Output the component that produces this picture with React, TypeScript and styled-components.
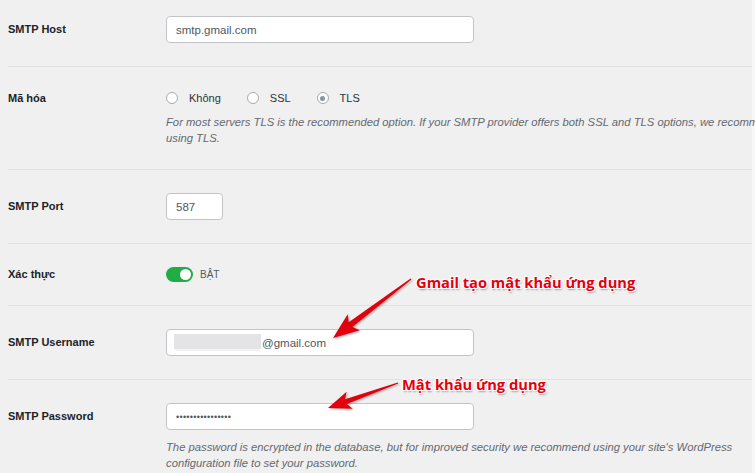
import React, { FC } from 'react';
import styled, { createGlobalStyle } from 'styled-components';

const GlobalStyle = createGlobalStyle`
    html, body {
        margin: 0;
        background: #f7f7f7;
    }
    body {
        font-family: "Liberation Sans", Arial, sans-serif;
        overflow: hidden;
    }
`;

type Pt = [number, number];

// tapered arrow: thin tail, wide head at the tip
const arrowPoints = (tail: Pt, tip: Pt, headLen: number, headHalf: number, neckHalf: number, tailHalf: number) => {
    const dx = tail[0] - tip[0];
    const dy = tail[1] - tip[1];
    const len = Math.hypot(dx, dy);
    const ux = dx / len;
    const uy = dy / len;
    const nx = -uy;
    const ny = ux;
    const bx = tip[0] + ux * headLen;
    const by = tip[1] + uy * headLen;
    const wx = tip[0] + ux * (headLen + 4);
    const wy = tip[1] + uy * (headLen + 4);
    const pts: Pt[] = [
        tip,
        [wx + nx * headHalf, wy + ny * headHalf],
        [bx + nx * neckHalf, by + ny * neckHalf],
        [tail[0] + nx * tailHalf, tail[1] + ny * tailHalf],
        [tail[0] - nx * tailHalf, tail[1] - ny * tailHalf],
        [bx - nx * neckHalf, by - ny * neckHalf],
        [wx - nx * headHalf, wy - ny * headHalf],
    ];
    return pts.map((p) => `${p[0].toFixed(1)},${p[1].toFixed(1)}`).join(' ');
};

const App: FC = () => {
    return (
        <Root>
            <GlobalStyle />
            <Page>
                <Row>
                    <Label $h={27}>SMTP Host</Label>
                    <div>
                        <Field $w={308}>smtp.gmail.com</Field>
                    </div>
                </Row>
                <Row>
                    <Label $h={16}>Mã hóa</Label>
                    <div>
                        <RadioGroup>
                            <Option>
                                <Radio />
                                Không
                            </Option>
                            <Option>
                                <Radio />
                                SSL
                            </Option>
                            <Option>
                                <Radio $checked />
                                TLS
                            </Option>
                        </RadioGroup>
                        <Description $gap={9}>
                            For most servers TLS is the recommended option. If your SMTP provider offers both SSL and TLS options, we recommend
                            <br />
                            using TLS.
                        </Description>
                    </div>
                </Row>
                <Row>
                    <Label $h={27}>SMTP Port</Label>
                    <div>
                        <Field $w={57}>587</Field>
                    </div>
                </Row>
                <Row>
                    <Label $h={15}>Xác thực</Label>
                    <ToggleRow>
                        <Toggle>
                            <Knob />
                        </Toggle>
                        <ToggleText>BẬT</ToggleText>
                    </ToggleRow>
                </Row>
                <Row>
                    <Label $h={27}>SMTP Username</Label>
                    <div>
                        <Field $w={308}>
                            <Redacted aria-hidden />
                            @gmail.com
                        </Field>
                    </div>
                </Row>
                <Row $last>
                    <Label $h={27}>SMTP Password</Label>
                    <div>
                        <Field $w={308}>
                            <Dots>••••••••••••••••</Dots>
                        </Field>
                        <Description $gap={10}>
                            The password is encrypted in the database, but for improved security we recommend using your site's WordPress
                            <br />
                            configuration file to set your password.
                        </Description>
                    </div>
                </Row>
            </Page>

            <Arrows width="755" height="473" viewBox="0 0 755 473">
                <polygon points={arrowPoints([411, 279], [333, 338], 22, 10, 3, 0.6)} />
                <polygon points={arrowPoints([398, 383], [328, 408], 19, 9, 2.6, 0.6)} />
            </Arrows>
            <Callout $left={416} $top={272}>Gmail tạo mật khẩu ứng dụng</Callout>
            <Callout $left={402} $top={374}>Mật khẩu ứng dụng</Callout>
        </Root>
    );
};

const Root = styled.div`
    position: relative;
    width: 755px;
    height: 473px;
    overflow: hidden;
`;

const Page = styled.div`
    width: 752px;
    min-height: 490px;
    margin-top: -7px;
    padding-left: 8px;
    box-sizing: border-box;
    background: #f0f0f1;
`;

const Row = styled.div<{ $last?: boolean }>`
    display: grid;
    grid-template-columns: 158px 1fr;
    align-items: start;
    padding: 23px 0;
    border-bottom: ${(p) => (p.$last ? 'none' : '1px solid #e1e1e3')};
`;

const Label = styled.div<{ $h: number }>`
    font-size: 11px;
    font-weight: 700;
    color: #1d2327;
    line-height: ${(p) => p.$h}px;
`;

const Field = styled.div<{ $w: number }>`
    display: flex;
    align-items: center;
    width: ${(p) => p.$w}px;
    height: 27px;
    box-sizing: border-box;
    padding: 0 9px;
    background: #fff;
    border: 1px solid #c3c4c7;
    border-radius: 4px;
    font-size: 11.5px;
    color: #50575e;
    white-space: nowrap;
`;

const Redacted = styled.span`
    display: inline-block;
    width: 87px;
    height: 15px;
    margin: -3px 1px 0 -2px;
    background: #e4e4e6;
    box-shadow: 0 3px 0 -1px #f2f2f2;
`;

const Dots = styled.span`
    font-size: 9px;
    letter-spacing: 0.3px;
    color: #50575e;
`;

const RadioGroup = styled.div`
    display: flex;
    align-items: center;
    gap: 26px;
    height: 16px;
`;

const Option = styled.label`
    display: flex;
    align-items: center;
    gap: 11px;
    font-size: 11px;
    color: #2c3338;
`;

const Radio = styled.span<{ $checked?: boolean }>`
    position: relative;
    width: 12px;
    height: 12px;
    box-sizing: border-box;
    border: 1px solid #a7aaad;
    border-radius: 50%;
    background: #fff;

    &::after {
        content: '';
        display: ${(p) => (p.$checked ? 'block' : 'none')};
        position: absolute;
        left: 2.5px;
        top: 2.5px;
        width: 5px;
        height: 5px;
        border-radius: 50%;
        background: #8a93a3;
    }
`;

const Description = styled.p<{ $gap: number }>`
    margin: ${(p) => p.$gap}px 0 0;
    font-size: 11.25px;
    font-style: italic;
    line-height: 15.5px;
    color: #646970;
    white-space: nowrap;
`;

const ToggleRow = styled.div`
    display: flex;
    align-items: center;
    gap: 7px;
    height: 15px;
`;

const Toggle = styled.span`
    display: flex;
    align-items: center;
    justify-content: flex-end;
    width: 27px;
    height: 15px;
    box-sizing: border-box;
    padding: 0 2px;
    border-radius: 8px;
    background: #20ad45;
`;

const Knob = styled.span`
    width: 11px;
    height: 11px;
    border-radius: 50%;
    background: #fff;
`;

const ToggleText = styled.span`
    font-size: 10px;
    color: #50575e;
`;

const Arrows = styled.svg`
    position: absolute;
    left: 0;
    top: 0;
    pointer-events: none;
    fill: #e3000e;
    filter: drop-shadow(1px 1px 1px rgba(0, 0, 0, 0.35));
`;

const Callout = styled.div<{ $left: number; $top: number }>`
    position: absolute;
    left: ${(p) => p.$left}px;
    top: ${(p) => p.$top}px;
    font-family: "Open Sans", "Liberation Sans", sans-serif;
    font-size: 14.7px;
    font-weight: 700;
    line-height: 20px;
    color: #e3000e;
    white-space: nowrap;
    text-shadow:
        -1px -1px 0 #fff,
        1px -1px 0 #fff,
        -1px 1px 0 #fff,
        1px 1px 0 #fff,
        1px 2px 2px rgba(0, 0, 0, 0.35);
`;

export default App;
